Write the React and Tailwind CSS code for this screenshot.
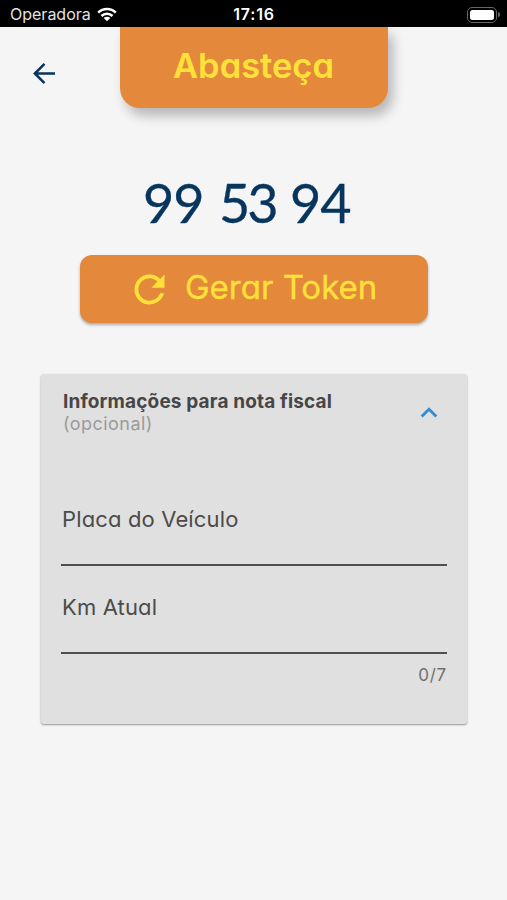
function StatusBar() {
  return (
    <div className="relative z-10 flex h-[27px] items-center bg-black pt-[2px] text-white">
      <div className="flex flex-1 items-center pl-[10px]">
        <span className="text-[16px] leading-[25px] text-[#e2e2e2]">Operadora</span>
        <svg className="ml-[6px]" width="20" height="15" viewBox="0 0 21 15" fill="none" stroke="white" strokeWidth="2.700">
          <path d="M1.3 5.6a13 13 0 0 1 18.4 0" />
          <path d="M4.7 9.1a8.2 8.2 0 0 1 11.6 0" />
          <path d="M7 11.2a5 5 0 0 1 7 0L10.500 14.700z" fill="white" stroke="none" />
        </svg>
      </div>
      <span className="mr-[2px] text-[16px] font-semibold leading-[25px] tracking-[0.8px]">17:16</span>
      <div className="flex flex-1 items-center justify-end pr-[7px]">
        <div className="h-4 w-[30px] rounded-[5px] border border-[#666] p-[2px]">
          <div className="h-full rounded-[2.500px] bg-white" />
        </div>
        <div className="ml-px h-[5px] w-[2px] rounded-r-full bg-[#666]" />
      </div>
    </div>
  );
}

function Field({ label }) {
  return (
    <div className="flex h-[88px] flex-col border-b-2 border-[#504e4e] pl-px pt-[27px]">
      <span className="text-[22px] leading-7 tracking-[0.14px] text-[#4b4b4b] [font-feature-settings:'cv11']">{label}</span>
    </div>
  );
}

export default function App() {
  return (
    <div className="h-[900px] w-[507px] overflow-hidden whitespace-nowrap bg-[#f5f5f5] font-['Inter','Liberation_Sans',sans-serif]">
      <StatusBar />
      <header className="flex h-[81px] items-start">
        <button className="ml-[30px] mt-[33px] flex h-7 w-7 items-center justify-center" aria-label="Voltar">
          <svg width="28" height="28" viewBox="0 0 28 28" fill="none" stroke="#07355e" strokeWidth="2.500">
            <path d="M25 13.500H5M14.500 3.800L4.800 13.500l9.700 9.700" />
          </svg>
        </button>
        <div className="ml-[62px] flex h-[81px] w-[268px] justify-center rounded-b-[20px] bg-[#e4893b] shadow-[5px_8px_12px_rgba(0,0,0,0.25)]">
          <h1 className="mt-[17px] pr-px text-[34.500px] font-semibold leading-[44px] text-[#ffe13a] [font-feature-settings:'cv11']">Abasteça</h1>
        </div>
      </header>
      <main>
        <div className="mt-[63px] flex pl-[143px] font-['Lato','Liberation_Sans',sans-serif] text-[54px] leading-[64px] tracking-[-1px] text-[#07355e] [-webkit-text-stroke:0.300px_#07355e]">
          <span className="w-[76px]">99</span>{" "}
          <span className="w-[71px] tracking-[-3px]">53</span>{" "}
          <span>94</span>
        </div>
        <button className="ml-[80px] mt-[20px] flex h-[68px] w-[348px] items-center rounded-xl bg-[#e4893b] pl-[47px] text-[#ffe13a] shadow-[0_2px_3px_rgba(0,0,0,0.3)]">
          <svg width="45" height="45" viewBox="0 0 24 24" fill="currentColor">
            <path d="M17.650 6.350A7.960 7.960 0 0 0 12 4a8 8 0 1 0 7.730 10h-2.080A6 6 0 1 1 12 6c1.660 0 3.140.69 4.220 1.780L13 11h7V4z" />
          </svg>
          <span className="ml-[13px] pb-[4px] text-[33px] leading-10 [-webkit-text-stroke:0.3px_#ffe13a] [font-feature-settings:'cv11']">Gerar Token</span>
        </button>
        <section className="ml-[41px] mt-[51px] h-[350px] w-[426px] rounded-[3px] bg-[#e0e0e0] px-[20px] pt-[15px] shadow-[0_1px_2px_rgba(0,0,0,0.4)]">
          <div className="flex h-[86px] items-start justify-between">
            <div className="pl-[2px]">
              <div className="pt-px text-[19px] font-bold leading-[23px] tracking-[0.15px] text-[#464646]">Informações para nota fiscal</div>
              <div className="text-[18px] leading-[22px] tracking-[0.45px] text-[#9b9b9b]">(opcional)</div>
            </div>
            <svg className="mr-[9px] mt-[17px]" width="18" height="13" viewBox="0 0 18 13" fill="none" stroke="#318cd2" strokeWidth="2.800">
              <path d="M1.700 10.500L9 3.200l7.300 7.300" />
            </svg>
          </div>
          <div>
            <div className="mt-[3px]"><Field label="Placa do Veículo" /></div>
            <Field label="Km Atual" />
            <div className="mt-[10px] text-right text-[17px] leading-[22px] tracking-[0.8px] text-[#707070]">0/7</div>
          </div>
        </section>
      </main>
    </div>
  );
}
